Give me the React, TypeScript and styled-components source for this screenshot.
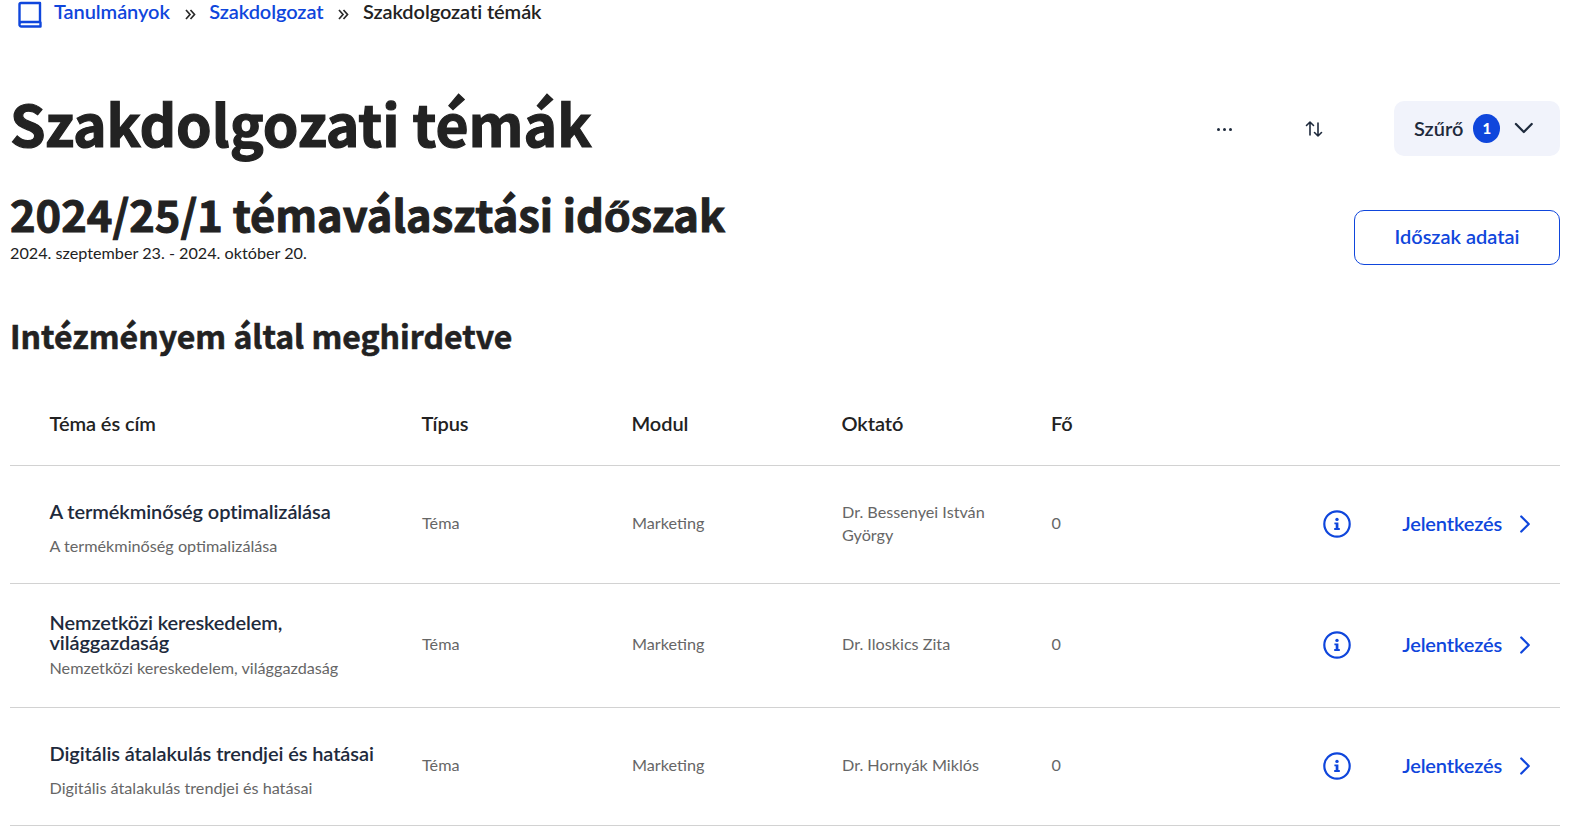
import React from 'react'
import styled, { createGlobalStyle } from 'styled-components'
import { ChevronDown, ChevronRight } from 'lucide-react'

const GlobalStyle = createGlobalStyle`
    html, body {
        margin: 0;
        padding: 0;
        background: #fff;
        overflow: hidden;
    }
    body {
        font-family: Lato, "Noto Sans", sans-serif;
        color: #222;
    }
`

const topics = [
    { title: 'A termékminőség optimalizálása', teacher: 'Dr. Bessenyei István György', tall: false },
    { title: 'Nemzetközi kereskedelem, világgazdaság', teacher: 'Dr. Iloskics Zita', tall: true },
    { title: 'Digitális átalakulás trendjei és hatásai', teacher: 'Dr. Hornyák Miklós', tall: false },
]

const BookIcon = () => (
    <svg width="26" height="28" viewBox="0 0 26 28" fill="none" stroke="#0f46dc" strokeWidth="2.4" strokeLinejoin="round" strokeLinecap="round">
        <path d="M3.5 23V3.5A1.5 1.5 0 0 1 5 2H24V21H5.5A2 2 0 0 0 3.5 23A2 2 0 0 0 5.5 25.5H24.5V21.5" />
    </svg>
)

const SortIcon = () => (
    <svg width="20" height="18" viewBox="0 0 20 18" fill="none" stroke="#1e2a3c" strokeWidth="1.6" strokeLinecap="round" strokeLinejoin="round">
        <path d="M6 15V2M2.5 5.5L6 2l3.5 3.5" />
        <path d="M14 3v13M10.5 12.5L14 16l3.5-3.5" />
    </svg>
)

const InfoIcon = () => (
    <svg width="28" height="28" viewBox="0 0 28 28" fill="none">
        <circle cx="14" cy="14" r="12.7" stroke="#0f46dc" strokeWidth="2.2" />
        <circle cx="14" cy="9.4" r="1.7" fill="#0f46dc" />
        <path d="M11.4 12.4H15.4V18H16.8V19.9H11.2V18H12.7V14.3H11.4Z" fill="#0f46dc" />
    </svg>
)

const DoubleChevron = () => (
    <svg width="11" height="11" viewBox="0 0 11 11" fill="none" stroke="#2a2a2a" strokeWidth="1.7">
        <path d="M1 1l4 4.5-4 4.5" />
        <path d="M5.5 1l4 4.5-4 4.5" />
    </svg>
)

export default function App() {
    return (
        <Page>
            <GlobalStyle />
            <Breadcrumb>
                <BookWrap><BookIcon /></BookWrap>
                <CrumbLink>Tanulmányok</CrumbLink>
                <Sep><DoubleChevron /></Sep>
                <CrumbLink>Szakdolgozat</CrumbLink>
                <Sep><DoubleChevron /></Sep>
                <CrumbCurrent>Szakdolgozati témák</CrumbCurrent>
            </Breadcrumb>

            <TitleRow>
                <Title>Szakdolgozati témák</Title>
                <Actions>
                    <Dots>
                        <i /><i /><i />
                    </Dots>
                    <SortButton><SortIcon /></SortButton>
                    <FilterButton>
                        Szűrő
                        <Badge>1</Badge>
                        <ChevronDown size={34} strokeWidth={1.7} color="#1e2a3c" />
                    </FilterButton>
                </Actions>
            </TitleRow>

            <PeriodRow>
                <div>
                    <PeriodTitle>2024/25/1 témaválasztási időszak</PeriodTitle>
                    <PeriodDate>2024. szeptember 23. - 2024. október 20.</PeriodDate>
                </div>
                <OutlineButton>Időszak adatai</OutlineButton>
            </PeriodRow>

            <SectionTitle>Intézményem által meghirdetve</SectionTitle>

            <HeaderRow>
                <span>Téma és cím</span>
                <span>Típus</span>
                <span>Modul</span>
                <span>Oktató</span>
                <span>Fő</span>
            </HeaderRow>

            {topics.map((t) => (
                <Row key={t.title} $tall={t.tall}>
                    <TitleCell $tall={t.tall}>
                        <TopicTitle>{t.title}</TopicTitle>
                        <TopicSub>{t.title}</TopicSub>
                    </TitleCell>
                    <Cell>Téma</Cell>
                    <Cell>Marketing</Cell>
                    <Cell>{t.teacher}</Cell>
                    <Cell>0</Cell>
                    <RowActions>
                        <InfoIcon />
                        <ApplyLink>
                            <span>Jelentkezés</span>
                            <ChevronRight size={30} strokeWidth={1.8} color="#0f46dc" />
                        </ApplyLink>
                    </RowActions>
                </Row>
            ))}
        </Page>
    )
}

const Page = styled.div`
    width: 1586px;
    height: 833px;
    box-sizing: border-box;
    padding: 0 26px 0 10px;
    overflow: hidden;
`

const Breadcrumb = styled.nav`
    display: flex;
    align-items: center;
    height: 22px;
    line-height: 20px;
    font-size: 20px;
    font-weight: 600;
    letter-spacing: -0.08px;
`

const BookWrap = styled.span`
    display: flex;
    margin: 0 12px 0 6px;
    position: relative;
    top: 4px;
`

const CrumbLink = styled.a`
    color: #0f46dc;
`

const CrumbCurrent = styled.span`
    color: #222;
`

const Sep = styled.span`
    display: flex;
    margin: 6px 13.5px 0 15px;
`

const TitleRow = styled.div`
    display: flex;
    align-items: center;
    justify-content: space-between;
    margin-top: 73px;
    height: 66px;
`

const Title = styled.h1`
    margin: 0;
    padding-bottom: 13px;
    font-family: "Noto Sans CJK JP", sans-serif;
    font-size: 57px;
    font-weight: 700;
    line-height: 66px;
    color: #222;
    -webkit-text-stroke: 1.2px #222;
`

const Actions = styled.div`
    display: flex;
    align-items: center;
`

const Dots = styled.div`
    display: flex;
    gap: 3px;
    margin-right: 72px;
    position: relative;
    top: 1px;

    i {
        width: 3px;
        height: 3px;
        border-radius: 50%;
        background: #1e2a3c;
    }
`

const SortButton = styled.div`
    display: flex;
    margin-right: 70px;
    position: relative;
    top: 1px;
`

const FilterButton = styled.div`
    display: flex;
    align-items: center;
    box-sizing: border-box;
    width: 166px;
    height: 55px;
    padding: 0 20px;
    background: #f1f3fb;
    border-radius: 10px;
    font-size: 20px;
    font-weight: 600;
    color: #1e2a3c;

    svg {
        margin-left: 8px;
    }
`

const Badge = styled.span`
    display: flex;
    align-items: center;
    justify-content: center;
    width: 29px;
    height: 29px;
    margin-left: 10px;
    border-radius: 50%;
    background: #0f46dc;
    color: #fff;
    font-size: 15px;
    font-weight: 900;
`

const PeriodRow = styled.div`
    display: flex;
    align-items: flex-end;
    justify-content: space-between;
    margin-top: 27px;
`

const PeriodTitle = styled.h2`
    margin: 0;
    font-family: "Noto Sans CJK JP", sans-serif;
    font-size: 43.4px;
    font-weight: 700;
    line-height: 50px;
    color: #222;
    -webkit-text-stroke: 1px #222;
`

const PeriodDate = styled.div`
    font-size: 16.2px;
    line-height: 20px;
    color: #222;
    margin-top: 5px;
`

const OutlineButton = styled.button`
    box-sizing: border-box;
    width: 206px;
    height: 55px;
    margin-bottom: -2px;
    padding: 0 0 4px;
    background: #fff;
    border: 1px solid #0f46dc;
    border-radius: 10px;
    font-family: Lato, sans-serif;
    font-size: 20px;
    font-weight: 600;
    color: #0f46dc;
`

const SectionTitle = styled.h3`
    margin: 50px 0 0;
    font-family: "Noto Sans CJK JP", sans-serif;
    font-size: 32px;
    font-weight: 700;
    line-height: 44px;
    color: #222;
    -webkit-text-stroke: 0.6px #222;
`

const columns = `
    display: grid;
    grid-template-columns: 372px 210px 210px 209.5px 1fr;
    align-items: center;
    padding-left: 40px;
    border-bottom: 1px solid #d2d2d2;
`

const HeaderRow = styled.div`
    ${columns}
    height: 109px;
    padding-top: 24px;
    padding-left: 39.5px;
    box-sizing: border-box;
    font-size: 20px;
    font-weight: 600;
    letter-spacing: -0.08px;
    color: #222;
`

const Row = styled.div<{ $tall: boolean }>`
    ${columns}
    grid-template-columns: 372.5px 210px 210px 209.5px 60px 1fr;
    padding-left: 39.5px;
    height: ${(p) => (p.$tall ? '124px' : '118px')};
    box-sizing: border-box;
`

const TitleCell = styled.div<{ $tall: boolean }>`
    display: flex;
    flex-direction: column;
    gap: ${(p) => (p.$tall ? '6px' : '15px')};
    max-width: 330px;
    position: relative;
    top: ${(p) => (p.$tall ? '-1px' : '3.5px')};
`

const TopicTitle = styled.div`
    font-size: 20px;
    font-weight: 600;
    line-height: 20px;
    letter-spacing: -0.1px;
    color: #1e2a3c;
`

const TopicSub = styled.div`
    font-size: 16.2px;
    line-height: 20px;
    color: #666;
`

const Cell = styled.div`
    padding-bottom: 4px;
    font-size: 16.2px;
    line-height: 23px;
    color: #666;
    max-width: 160px;
`

const RowActions = styled.div`
    display: flex;
    align-items: center;
    justify-content: flex-end;
    gap: 51px;
    padding-right: 20px;
    position: relative;
    top: -1px;
`

const ApplyLink = styled.a`
    display: flex;
    align-items: center;
    gap: 8px;
    font-size: 20px;
    font-weight: 600;
    letter-spacing: -0.15px;
    color: #0f46dc;

    span {
        position: relative;
        top: -1px;
    }
`
